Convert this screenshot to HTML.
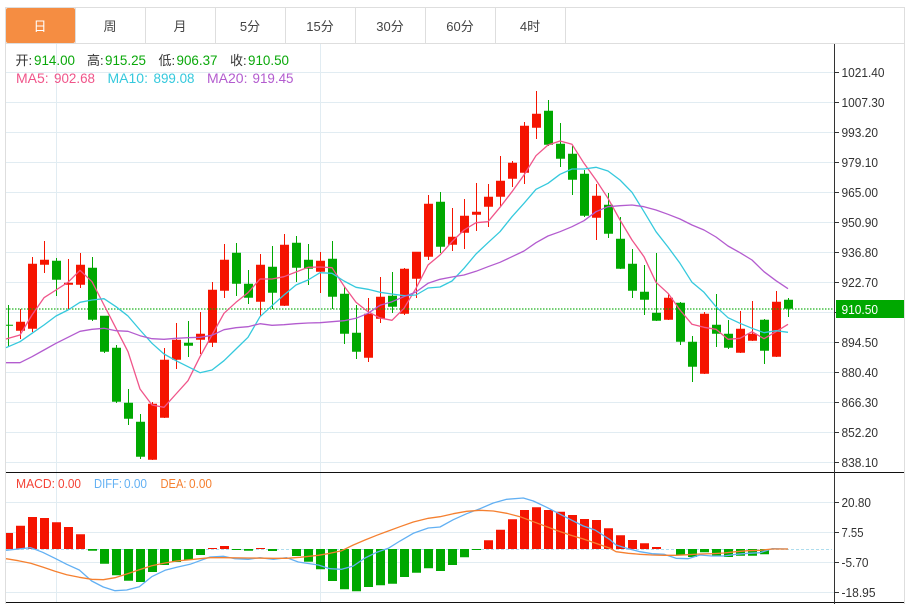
<!DOCTYPE html>
<html>
<head>
<meta charset="utf-8">
<style>
html,body{margin:0;padding:0;background:#fff;width:920px;height:604px;overflow:hidden}
svg{display:block;position:absolute;left:0;top:0}
text{font-family:"Liberation Sans","Noto Sans CJK SC",sans-serif}
</style>
</head>
<body>
<svg width="920" height="604" viewBox="0 0 920 604" xmlns="http://www.w3.org/2000/svg">
<!-- frame -->
<path d="M5.5 7V604M904.5 7V604M5 7.5H905M5 43.5H905" stroke="#dedede" fill="none"/>
<path d="M75.5 8V43M145.5 8V43M215.5 8V43M285.5 8V43M355.5 8V43M425.5 8V43M495.5 8V43M565.5 8V43" stroke="#dedede" fill="none"/>
<rect x="6" y="8" width="69" height="35" rx="2" fill="#f58d42"/>
<g font-size="13" text-anchor="middle" fill="#444">
<text x="40" y="31" fill="#fff">日</text>
<text x="110" y="31">周</text>
<text x="180" y="31">月</text>
<text x="250" y="31">5分</text>
<text x="320" y="31">15分</text>
<text x="390" y="31">30分</text>
<text x="460" y="31">60分</text>
<text x="530" y="31">4时</text>
</g>
<!-- grid -->
<path d="M6 72.5H834M6 102.5H834M6 132.5H834M6 162.5H834M6 192.5H834M6 222.5H834M6 252.5H834M6 282.5H834M6 312.5H834M6 342.5H834M6 372.5H834M6 402.5H834M6 432.5H834M6 462.5H834M6 502.5H834M6 532.5H834M6 562.5H834M6 592.5H834M56.5 44V602M320.5 44V602" stroke="#e1ecf2" fill="none"/>
<!-- wicks -->
<path fill="none" stroke="#f51400" d="M20.5 309V339M32.5 257V332M44.5 241V273M68.5 259V309M80.5 253V288M152.5 402V460M164.5 348V418M176.5 323V369M200.5 312V354M212.5 282V347M224.5 244V298M260.5 254V316M284.5 234V306M320.5 252V293M368.5 298V362M380.5 277V323M404.5 268V315M416.5 252V298M428.5 195V260M452.5 208V251M464.5 199V249M476.5 183V231M488.5 184V227M500.5 156V207M512.5 161V187M524.5 122V184M536.5 91V139M596.5 184V240M668.5 294V320M704.5 312V374M740.5 311V353M752.5 301V341M776.5 291V357"/>
<path fill="none" stroke="#00a800" d="M8.5 305V346M56.5 258V296M92.5 257V321M104.5 316V353M116.5 345V403M128.5 389V425M140.5 414V459M188.5 321V357M236.5 243V296M248.5 270V304M272.5 246V309M296.5 236V282M308.5 244V285M332.5 241V309M344.5 287V344M356.5 305V359M392.5 272V313M440.5 192V253M548.5 100V146M560.5 123V167M572.5 146V195M584.5 170V217M608.5 193V238M620.5 217V269M632.5 249V298M644.5 265V315M656.5 253V321M680.5 302V345M692.5 336V382M716.5 294V347M728.5 320V349M764.5 319V364M788.5 298V317"/>
<!-- bodies -->
<path transform="translate(0,-.3)" fill="#f51400" d="M16 322h9v9h-9zM28 264h9v65h-9zM40 260h9v5h-9zM64 283h9v2h-9zM76 265h9v20h-9zM148 404h9v56h-9zM160 360h9v58h-9zM172 340h9v20h-9zM196 334h9v6h-9zM208 290h9v53h-9zM220 260h9v31h-9zM256 265h9v37h-9zM280 245h9v61h-9zM316 261h9v11h-9zM364 314h9v44h-9zM376 297h9v22h-9zM400 269h9v45h-9zM412 252h9v27h-9zM424 204h9v53h-9zM448 237h9v8h-9zM460 216h9v17h-9zM472 212h9v3h-9zM484 197h9v10h-9zM496 181h9v16h-9zM508 163h9v16h-9zM520 126h9v47h-9zM532 114h9v14h-9zM592 196h9v22h-9zM664 298h9v22h-9zM700 314h9v60h-9zM736 329h9v24h-9zM748 334h9v7h-9zM772 302h9v55h-9z"/>
<path transform="translate(0,-.3)" fill="#00a800" d="M6 325h7v1h-7zM52 261h9v19h-9zM88 268h9v52h-9zM100 316h9v36h-9zM112 348h9v54h-9zM124 403h9v16h-9zM136 422h9v35h-9zM184 343h9v3h-9zM232 253h9v31h-9zM244 284h9v14h-9zM268 267h9v26h-9zM292 243h9v25h-9zM304 260h9v9h-9zM328 259h9v38h-9zM340 294h9v40h-9zM352 333h9v19h-9zM388 296h9v11h-9zM436 202h9v45h-9zM544 111h9v34h-9zM556 144h9v15h-9zM568 154h9v26h-9zM580 174h9v42h-9zM604 205h9v29h-9zM616 239h9v30h-9zM628 264h9v27h-9zM640 292h9v8h-9zM652 313h9v8h-9zM676 303h9v39h-9zM688 342h9v25h-9zM712 325h9v9h-9zM724 334h9v14h-9zM760 320h9v31h-9zM784 300h9v9h-9z"/>
<!-- price line -->
<line x1="6" y1="309" x2="834" y2="309" stroke="#00a800" stroke-opacity=".55" stroke-width="2" stroke-dasharray="1.5 1.5"/>
<!-- MA lines -->
<g fill="none" stroke-width="1.3" stroke-linejoin="round">
<polyline stroke="#f0558a" points="6,339 20,335 32,315 44,297.7 56,290 68,282.3 80,270.3 92,281.7 104,305 116,328.3 128,351.7 140,389 152,405 164,407.3 176,394 188,380.7 200,356.7 212,335 224,313.3 236,302.3 248,292.7 260,279 272,279 284,276.7 296,272 308,267.3 320,267 332,267.7 344,286 356,302.3 368,311.7 380,318 392,320.3 404,308.3 416,288.3 428,265 440,255 452,241.7 464,230 476,222.7 488,221.7 500,207.3 512,191.7 524,175 536,155.7 548,145 560,141 572,144.3 584,163.3 596,180 608,198.3 620,220 632,240 644,256.7 656,282.3 668,293.3 680,310 692,324.3 704,327.3 716,329.3 728,339.3 740,338.3 752,331.7 764,338.7 776,331.7 788,324.3"/>
<polyline stroke="#35c9dd" points="6,347.7 20,341.7 32,333.3 44,325 56,316 68,310 80,302.3 92,300 104,298.7 116,306.7 128,316 140,330 152,343.3 164,354 176,360.7 188,366.7 200,372.7 212,370 224,360.7 236,349 248,337.3 260,316.7 272,305.7 284,295 296,285 308,280 320,272.7 332,273.3 344,281 356,287.3 368,289.3 380,292.3 392,294 404,295.7 416,295 428,288 440,287 452,281 464,268.3 476,254 488,242.7 500,231.7 512,216.7 524,203.3 536,189.3 548,183.3 560,174.3 572,169 584,169 596,167.3 608,171 620,180 632,192.3 644,211.7 656,231.7 668,247 680,263.3 692,282.3 704,292.3 716,306.7 728,317.7 740,323.3 752,328.3 764,332.7 776,330.7 788,332.3"/>
<polyline stroke="#b35ccf" points="6,362.7 20,362.7 32,356.7 44,350 56,343.3 68,337.3 80,331.3 92,329.3 104,328.3 116,330.7 128,331.3 140,335.7 152,338.7 164,339.3 176,338.3 188,337.7 200,337.3 212,335.3 224,329.7 236,327.7 248,326.7 260,323.7 272,325.3 284,324.7 296,323.7 308,323 320,322.7 332,321.7 344,320.7 356,318.3 368,313.3 380,305.3 392,301.7 404,296.7 416,292 428,283.3 440,279.3 452,277 464,275 476,271.3 488,266.7 500,262.3 512,256.7 524,251 536,242.7 548,236 560,231.7 572,226.7 584,220.7 596,211.7 608,206.7 620,205.7 632,205 644,206.7 656,210 668,214.3 680,219 692,225 704,230 716,237 728,246 740,252.7 752,260 764,271.7 776,280.7 788,288.7"/>
</g>
<!-- MACD -->
<line x1="6" y1="549.5" x2="832" y2="549.5" stroke="#aeddee" stroke-dasharray="3 2"/>
<path fill="#f51400" d="M6 533h7v16h-7zM16 525.7h9v23.3h-9zM28 517h9v32h-9zM40 518h9v31h-9zM52 522.3h9v26.7h-9zM64 527h9v22h-9zM76 534.3h9v14.7h-9zM208 548h9v1h-9zM220 546h9v3h-9zM256 548h9v1h-9zM484 540.3h9v8.7h-9zM496 529.7h9v19.3h-9zM508 519.3h9v29.7h-9zM520 510h9v39h-9zM532 507.3h9v41.7h-9zM544 510h9v39h-9zM556 511.7h9v37.3h-9zM568 515h9v34h-9zM580 519h9v30h-9zM592 520h9v29h-9zM604 528.3h9v20.7h-9zM616 535.3h9v13.7h-9zM628 540h9v9h-9zM640 543.3h9v5.7h-9zM652 547h9v2h-9z"/>
<path fill="#00a800" d="M88 549h9v1.7h-9zM100 549h9v14.7h-9zM112 549h9v26.3h-9zM124 549h9v31.7h-9zM136 549h9v33h-9zM148 549h9v23h-9zM160 549h9v16h-9zM172 549h9v13h-9zM184 549h9v11h-9zM196 549h9v6h-9zM232 549h9v1h-9zM244 549h9v1.7h-9zM268 549h9v2h-9zM292 549h9v7h-9zM304 549h9v12.7h-9zM316 549h9v20.3h-9zM328 549h9v32h-9zM340 549h9v40.3h-9zM352 549h9v42.3h-9zM364 549h9v38h-9zM376 549h9v36.3h-9zM388 549h9v34.7h-9zM400 549h9v28h-9zM412 549h9v23.7h-9zM424 549h9v19.3h-9zM436 549h9v22h-9zM448 549h9v16h-9zM460 549h9v8.3h-9zM472 549h9v1h-9zM676 549h9v6h-9zM688 549h9v8h-9zM700 549h9v3.3h-9zM712 549h9v7h-9zM724 549h9v8h-9zM736 549h9v6.7h-9zM748 549h9v6.7h-9zM760 549h9v5.3h-9z"/>
<g fill="none" stroke-width="1.3" stroke-linejoin="round">
<polyline stroke="#62b0f3" points="6,550.3 18.3,549 30.7,547.7 42.7,552.3 55,558.3 66.7,564.3 79.3,570 91.7,581 103.3,587 115,590.7 126.7,590 139.3,586.7 151.7,576.7 165,570.3 176.7,567.3 190,564.3 200,560.7 210,557 223.3,556.3 235,558.7 248.3,559.3 260,557.7 273.3,559.3 286.7,557.7 298.3,562 318.3,565 330,568.7 341.7,569.3 353.3,566 365,558 376.7,552.3 388.3,548.3 400,541 413.3,533.3 428.3,528 440,527 453.3,519.7 466.7,513.7 480,508.7 493.3,503 506.7,499.3 523.3,498 533.3,501 546.7,507.3 558.3,513.3 570,519.3 583.3,526 595,530 610,539.7 616,545 628.3,548.7 640,551.7 652,553.7 664,554.3 676,558.3 688,558.7 700,555 712,556 724,556 736,554.3 748,553.3 760,552.7 772,548.7 788,549"/>
<polyline stroke="#f58030" points="6,558.7 18.3,560.7 30.7,563.3 43.3,567.3 55,571.3 66.7,574.7 79.3,577.3 91.7,579.3 103.3,579.7 115,577.7 126.7,574 139.3,569.7 151.7,565.7 165,563 176.7,561 190,559.7 200,558.7 210,557.7 223.3,557.7 248.3,558 273.3,558.3 286.7,558.3 300,557.3 318.3,555.3 330,553.3 341.7,550.7 353.3,545 365,540 376.7,535.3 388.3,531 400,526.7 413.3,522 428.3,518.3 440,516.7 453.3,513.7 466.7,511.3 480,510.3 493.3,511 506.7,513.3 520,516.7 533.3,521.7 546.7,526.7 558.3,531 570,535 583.3,539 595,543 610,548.3 616,551.7 628.3,553.3 640,554.3 652,555 664,555.3 676,555.3 688,554.7 700,554 712,553.7 724,553 736,551.7 748,550.7 760,550.3 772,549 788,549"/>
</g>
<!-- separators -->
<path d="M6 472.5H904M6 602.5H904" stroke="#111" fill="none"/>
<path d="M834.5 44V604" stroke="#333" fill="none"/>
<path d="M835 72.5h4M835 102.5h4M835 132.5h4M835 162.5h4M835 192.5h4M835 222.5h4M835 252.5h4M835 282.5h4M835 312.5h4M835 342.5h4M835 372.5h4M835 402.5h4M835 432.5h4M835 462.5h4M835 502.5h4M835 532.5h4M835 562.5h4M835 592.5h4" stroke="#333" fill="none"/>
<rect x="836" y="300" width="68" height="18" fill="#00a800"/>
<!-- axis labels -->
<g font-size="13" fill="#333" lengthAdjust="spacingAndGlyphs">
<text x="841.5" y="77" textLength="43" lengthAdjust="spacingAndGlyphs">1021.40</text>
<text x="841.5" y="107" textLength="43" lengthAdjust="spacingAndGlyphs">1007.30</text>
<text x="841.5" y="137" textLength="36.5" lengthAdjust="spacingAndGlyphs">993.20</text>
<text x="841.5" y="167" textLength="36.5" lengthAdjust="spacingAndGlyphs">979.10</text>
<text x="841.5" y="197" textLength="36.5" lengthAdjust="spacingAndGlyphs">965.00</text>
<text x="841.5" y="227" textLength="36.5" lengthAdjust="spacingAndGlyphs">950.90</text>
<text x="841.5" y="257" textLength="36.5" lengthAdjust="spacingAndGlyphs">936.80</text>
<text x="841.5" y="287" textLength="36.5" lengthAdjust="spacingAndGlyphs">922.70</text>
<text x="841.5" y="347" textLength="36.5" lengthAdjust="spacingAndGlyphs">894.50</text>
<text x="841.5" y="377" textLength="36.5" lengthAdjust="spacingAndGlyphs">880.40</text>
<text x="841.5" y="407" textLength="36.5" lengthAdjust="spacingAndGlyphs">866.30</text>
<text x="841.5" y="437" textLength="36.5" lengthAdjust="spacingAndGlyphs">852.20</text>
<text x="841.5" y="467" textLength="36.5" lengthAdjust="spacingAndGlyphs">838.10</text>
<text x="841.5" y="507" textLength="29.5" lengthAdjust="spacingAndGlyphs">20.80</text>
<text x="841.5" y="537" textLength="22" lengthAdjust="spacingAndGlyphs">7.55</text>
<text x="841.5" y="567" textLength="27" lengthAdjust="spacingAndGlyphs">-5.70</text>
<text x="841.5" y="597" textLength="34" lengthAdjust="spacingAndGlyphs">-18.95</text>
<text x="841.5" y="314" fill="#fff" textLength="36.5" lengthAdjust="spacingAndGlyphs">910.50</text>
</g>
<!-- legends -->
<g font-size="14">
<text x="15.5" y="65" fill="#333" font-size="13">开:</text><text x="34" y="65" fill="#0aa80a" textLength="41" lengthAdjust="spacingAndGlyphs">914.00</text>
<text x="87" y="65" fill="#333" font-size="13">高:</text><text x="105" y="65" fill="#0aa80a" textLength="41" lengthAdjust="spacingAndGlyphs">915.25</text>
<text x="158.5" y="65" fill="#333" font-size="13">低:</text><text x="176.5" y="65" fill="#0aa80a" textLength="41" lengthAdjust="spacingAndGlyphs">906.37</text>
<text x="230" y="65" fill="#333" font-size="13">收:</text><text x="248" y="65" fill="#0aa80a" textLength="41" lengthAdjust="spacingAndGlyphs">910.50</text>
<text x="16" y="83" fill="#f0558a">MA5:</text><text x="54" y="83" fill="#f0558a" textLength="41" lengthAdjust="spacingAndGlyphs">902.68</text>
<text x="107.5" y="83" fill="#35c9dd">MA10:</text><text x="153.5" y="83" fill="#35c9dd" textLength="41" lengthAdjust="spacingAndGlyphs">899.08</text>
<text x="207" y="83" fill="#b35ccf">MA20:</text><text x="252.5" y="83" fill="#b35ccf" textLength="41" lengthAdjust="spacingAndGlyphs">919.45</text>
</g>
<g font-size="13">
<text x="16" y="488" fill="#f44336" textLength="39" lengthAdjust="spacingAndGlyphs">MACD:</text><text x="58" y="488" fill="#f44336" textLength="23" lengthAdjust="spacingAndGlyphs">0.00</text>
<text x="94" y="488" fill="#62b0f3" textLength="28" lengthAdjust="spacingAndGlyphs">DIFF:</text><text x="124" y="488" fill="#62b0f3" textLength="23" lengthAdjust="spacingAndGlyphs">0.00</text>
<text x="160.5" y="488" fill="#f58030" textLength="26" lengthAdjust="spacingAndGlyphs">DEA:</text><text x="189" y="488" fill="#f58030" textLength="23" lengthAdjust="spacingAndGlyphs">0.00</text>
</g>
</svg>
</body>
</html>
